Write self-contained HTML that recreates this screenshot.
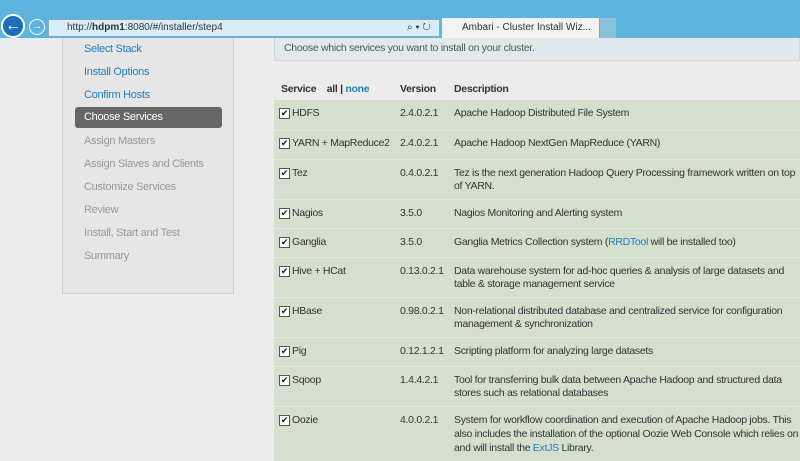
<!DOCTYPE html>
<html><head><style>
body{margin:0;width:800px;height:461px;overflow:hidden;background:#ececec;font-family:"Liberation Sans",sans-serif;font-size:10.5px;letter-spacing:-0.3px;color:#333;position:relative}
.top{position:absolute;left:0;top:0;width:800px;height:38px;background:#5db5dd}
.addr{position:absolute;left:48px;top:19px;width:392px;height:18px;background:#d8edf7;border:1px solid #8ab;box-sizing:border-box;font-size:10px;color:#333;line-height:16px;padding-left:18px;letter-spacing:0}
.tab{position:absolute;left:442px;top:18px;width:157px;height:20px;background:#f3f3f3;font-size:10px;line-height:20px;padding-left:20px;box-sizing:border-box;color:#333;letter-spacing:0}
.tab2{position:absolute;left:600px;top:18px;width:16px;height:20px;background:#8cc3dc}
.back{position:absolute;left:1px;top:14px;width:24px;height:24px;border-radius:50%;background:#1c6fb9;border:2px solid #fff;box-sizing:border-box;color:#fff;font-size:16px;text-align:center;line-height:19px;font-weight:bold}
.fwd{position:absolute;left:29px;top:19px;width:16px;height:16px;border-radius:50%;border:1px solid #fff;box-sizing:border-box;color:#fff;font-size:10px;text-align:center;line-height:14px}
.side{position:absolute;left:62px;top:38px;width:172px;height:256px;background:#e6e6e6;border:1px solid #cfcfcf;border-top:none;box-sizing:border-box}
.side div{position:absolute;left:21px;font-size:11px}
.sel{left:12px!important;width:147px;height:21px;background:#666;border-radius:3px;color:#fff;line-height:21px;padding-left:9px;box-sizing:border-box}
.info{position:absolute;left:274px;top:38px;width:526px;height:23px;background:#e2e9ec;border:1px solid #cfd8dc;border-top:none;box-sizing:border-box;padding-left:9px;line-height:20px;color:#555}
.hd{position:absolute;top:83px;font-weight:bold;color:#333}
.tb{position:absolute;left:274px;top:100px;width:526px;height:361px;background:#d5dfce}
.r{position:absolute;left:0;width:526px;border-top:1px solid #e2e8dd}
.r span{position:absolute;white-space:nowrap}
.r span.w{white-space:normal;width:345px;line-height:13px}
.c{left:5px;width:9px;height:9px;border:1px solid #555;background:#fff;font-size:9px;line-height:9px;text-align:center;color:#111}
a{color:#1d7fbf;text-decoration:none}
</style></head><body>
<div class="top"></div>
<div class="back">←</div><div class="fwd">→</div>
<div class="addr">http://<b>hdpm1</b>:8080/#/installer/step4<span style="position:absolute;left:358px;">⌕ ▾ ↻</span></div>
<div class="tab">Ambari - Cluster Install Wiz... ✕</div><div class="tab2"></div>
<div class="side">
<div style="top:5px;color:#1d7fbf">Select Stack</div>
<div style="top:28px;color:#1d7fbf">Install Options</div>
<div style="top:51px;color:#1d7fbf">Confirm Hosts</div>
<div class="sel" style="top:69px">Choose Services</div>
<div style="top:97px;color:#999">Assign Masters</div>
<div style="top:120px;color:#999">Assign Slaves and Clients</div>
<div style="top:143px;color:#999">Customize Services</div>
<div style="top:166px;color:#999">Review</div>
<div style="top:189px;color:#999">Install, Start and Test</div>
<div style="top:212px;color:#999">Summary</div>
</div>
<div class="info">Choose which services you want to install on your cluster.</div>
<div class="hd" style="left:281px">Service&nbsp;&nbsp;&nbsp; all | <a>none</a></div>
<div class="hd" style="left:400px">Version</div>
<div class="hd" style="left:454px">Description</div>
<div class="tb">
<div class="r" style="top:0;border:none"><span class="c" style="top:8px">✔</span><span style="left:18px;top:7px">HDFS</span><span style="left:126px;top:7px">2.4.0.2.1</span><span style="left:180px;top:7px">Apache Hadoop Distributed File System</span></div>
<div class="r" style="top:30px"><span class="c" style="top:7px">✔</span><span style="left:18px;top:6px">YARN + MapReduce2</span><span style="left:126px;top:6px">2.4.0.2.1</span><span style="left:180px;top:6px">Apache Hadoop NextGen MapReduce (YARN)</span></div>
<div class="r" style="top:59px"><span class="c" style="top:8px">✔</span><span style="left:18px;top:7px">Tez</span><span style="left:126px;top:7px">0.4.0.2.1</span><span class="w" style="left:180px;top:7px">Tez is the next generation Hadoop Query Processing framework written on top of YARN.</span></div>
<div class="r" style="top:99px"><span class="c" style="top:8px">✔</span><span style="left:18px;top:7px">Nagios</span><span style="left:126px;top:7px">3.5.0</span><span style="left:180px;top:7px">Nagios Monitoring and Alerting system</span></div>
<div class="r" style="top:128px"><span class="c" style="top:8px">✔</span><span style="left:18px;top:7px">Ganglia</span><span style="left:126px;top:7px">3.5.0</span><span style="left:180px;top:7px">Ganglia Metrics Collection system (<a>RRDTool</a> will be installed too)</span></div>
<div class="r" style="top:157px"><span class="c" style="top:8px">✔</span><span style="left:18px;top:7px">Hive + HCat</span><span style="left:126px;top:7px">0.13.0.2.1</span><span class="w" style="left:180px;top:7px">Data warehouse system for ad-hoc queries &amp; analysis of large datasets and table &amp; storage management service</span></div>
<div class="r" style="top:197px"><span class="c" style="top:8px">✔</span><span style="left:18px;top:7px">HBase</span><span style="left:126px;top:7px">0.98.0.2.1</span><span class="w" style="left:180px;top:7px">Non-relational distributed database and centralized service for configuration management &amp; synchronization</span></div>
<div class="r" style="top:237px"><span class="c" style="top:8px">✔</span><span style="left:18px;top:7px">Pig</span><span style="left:126px;top:7px">0.12.1.2.1</span><span style="left:180px;top:7px">Scripting platform for analyzing large datasets</span></div>
<div class="r" style="top:266px"><span class="c" style="top:8px">✔</span><span style="left:18px;top:7px">Sqoop</span><span style="left:126px;top:7px">1.4.4.2.1</span><span class="w" style="left:180px;top:7px">Tool for transferring bulk data between Apache Hadoop and structured data stores such as relational databases</span></div>
<div class="r" style="top:306px"><span class="c" style="top:8px">✔</span><span style="left:18px;top:7px">Oozie</span><span style="left:126px;top:7px">4.0.0.2.1</span><span class="w" style="left:180px;top:6px;line-height:14px">System for workflow coordination and execution of Apache Hadoop jobs. This also includes the installation of the optional Oozie Web Console which relies on and will install the <a>ExtJS</a> Library.</span></div>
</div>
</body></html>
